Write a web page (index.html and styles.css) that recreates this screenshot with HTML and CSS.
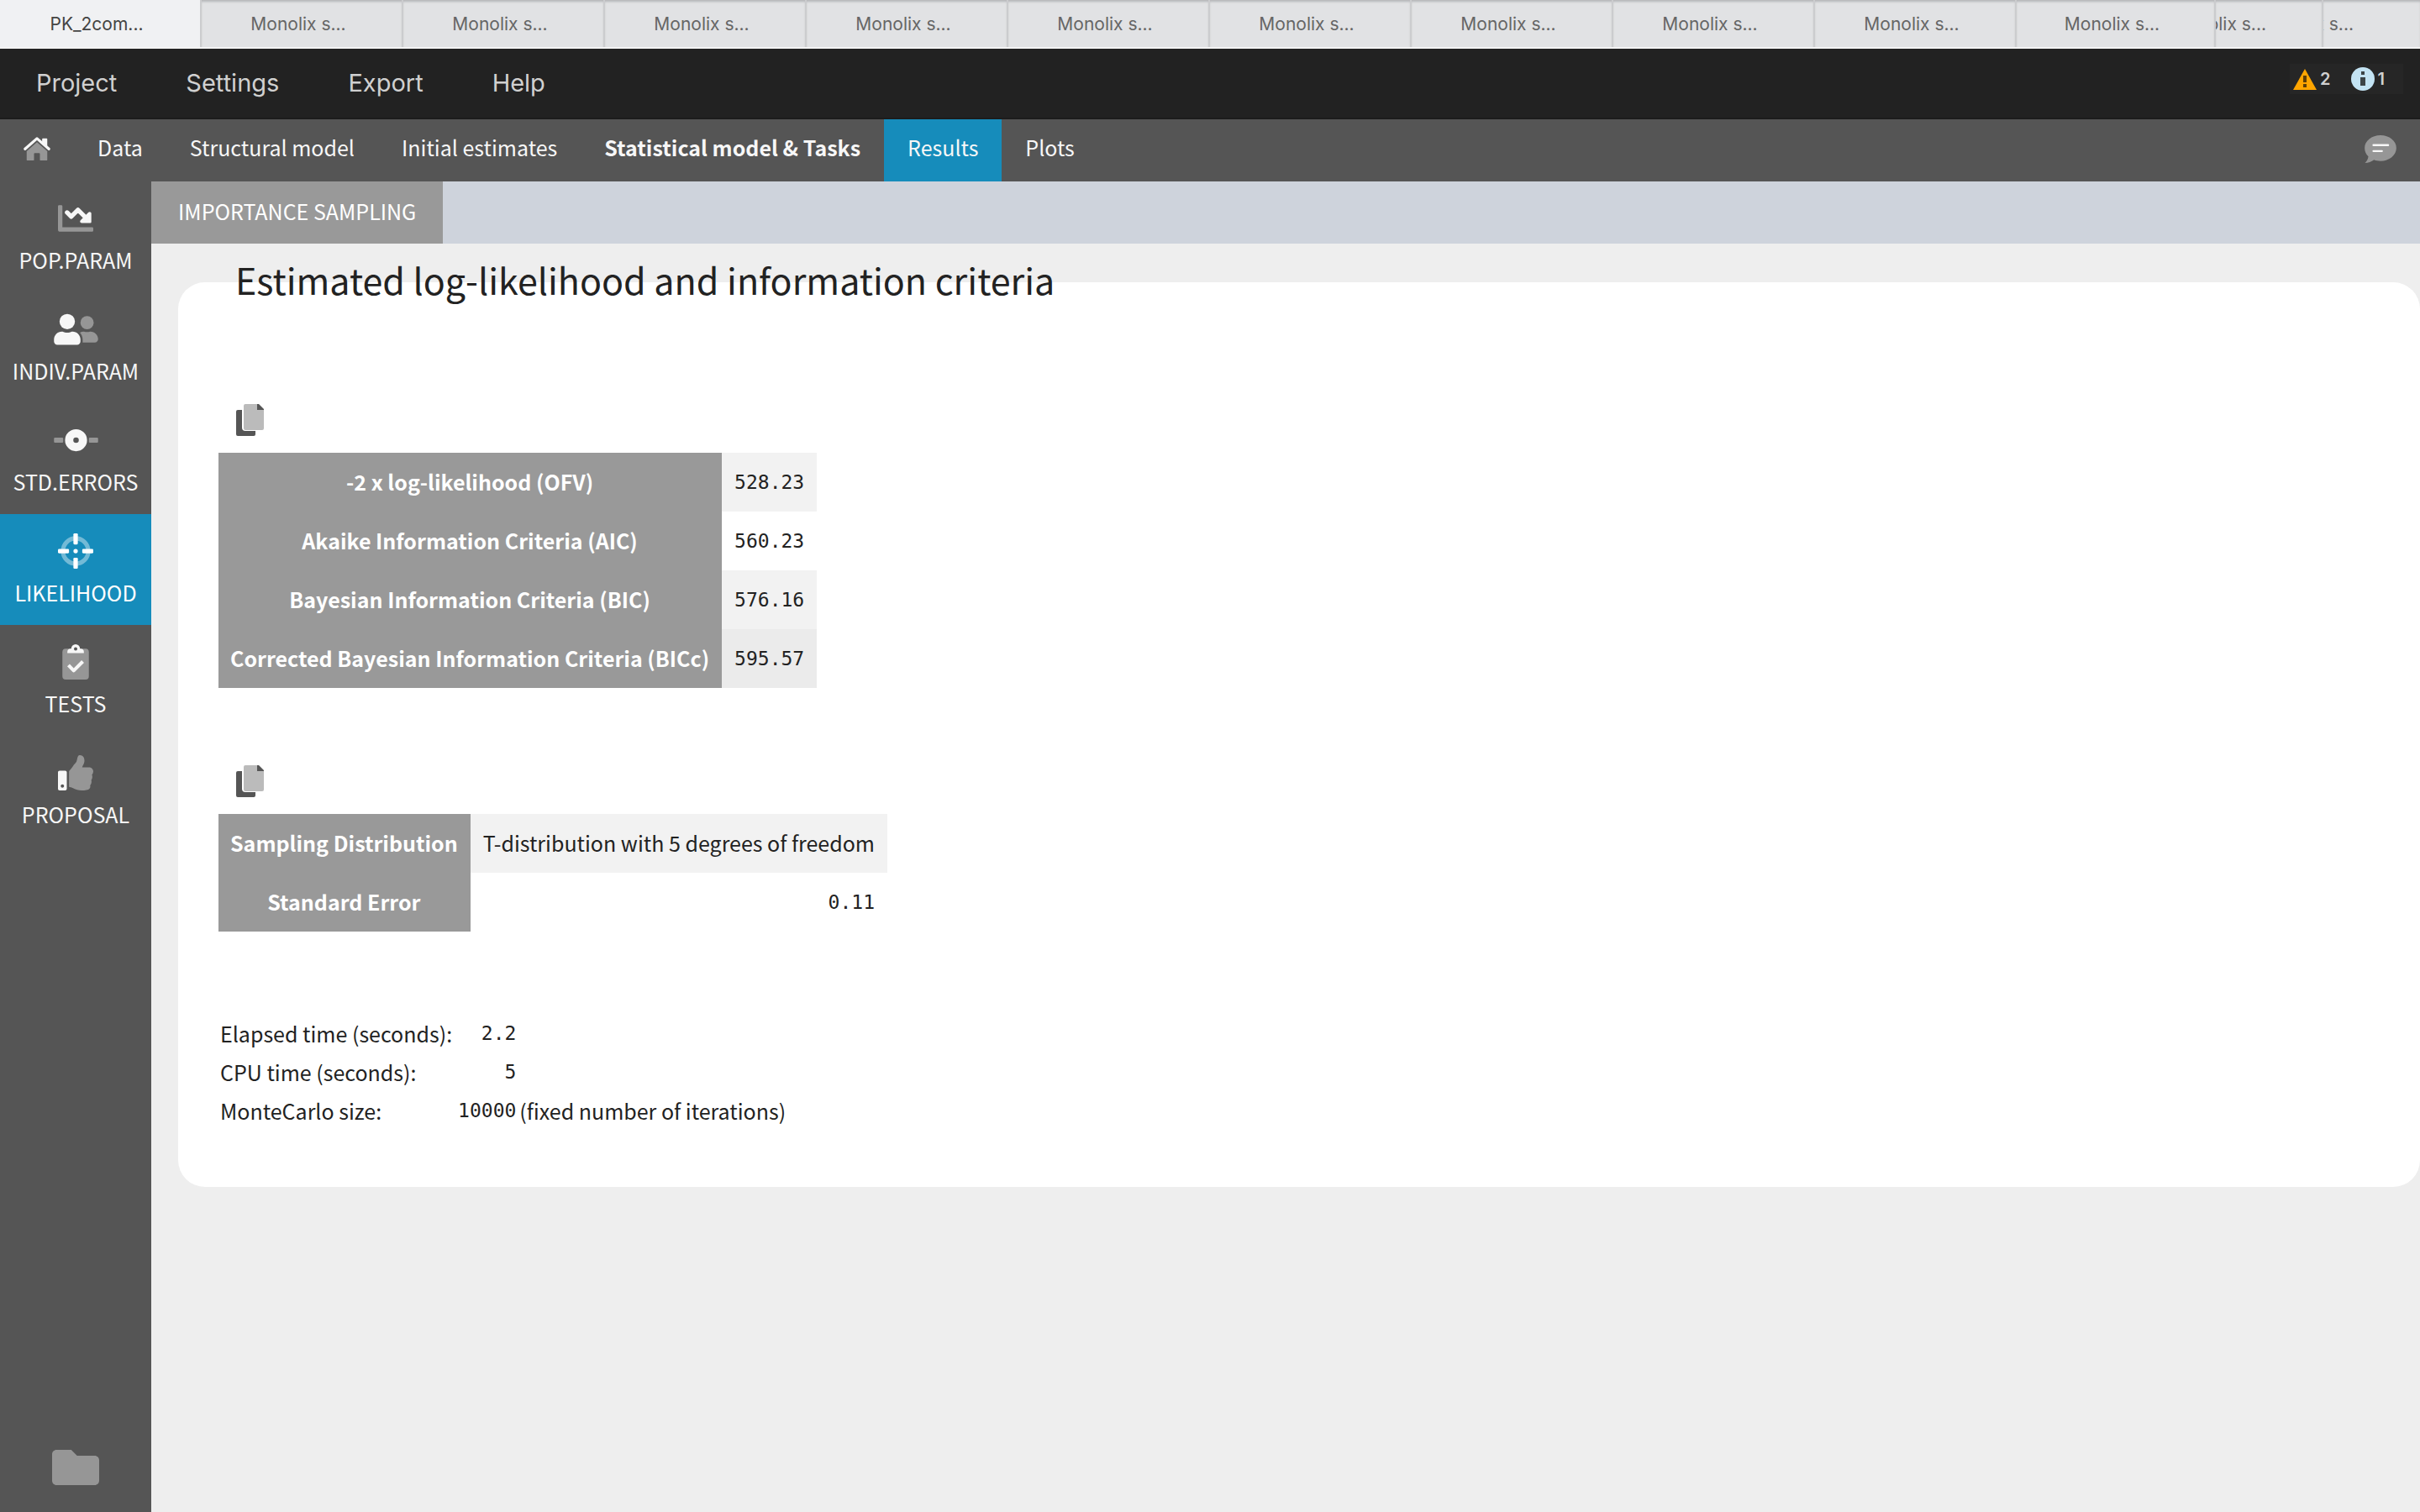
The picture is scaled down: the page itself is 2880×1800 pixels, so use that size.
FILE: index.html
```html
<!DOCTYPE html>
<html lang="en">
<head>
<meta charset="utf-8">
<title>Monolix</title>
<link rel="stylesheet" href="styles.css">
</head>
<body>
<div class="app">
  <div class="window-tabs">
    <button class="window-tab window-tab-active">PK_2com...</button>
    <button class="window-tab">Monolix s...</button>
    <button class="window-tab">Monolix s...</button>
    <button class="window-tab">Monolix s...</button>
    <button class="window-tab">Monolix s...</button>
    <button class="window-tab">Monolix s...</button>
    <button class="window-tab">Monolix s...</button>
    <button class="window-tab">Monolix s...</button>
    <button class="window-tab">Monolix s...</button>
    <button class="window-tab">Monolix s...</button>
    <button class="window-tab">Monolix s...</button>
    <button class="window-tab window-tab-stacked">Monolix s...</button>
    <button class="window-tab window-tab-last">Monolix s...</button>
  </div>

  <header class="menu-bar">
    <button class="menu-item">Project</button>
    <button class="menu-item">Settings</button>
    <button class="menu-item">Export</button>
    <button class="menu-item">Help</button>
    <div class="notices">
      <span class="notice">
        <svg width="28" height="28" viewBox="0 0 28 28" aria-label="Warnings"><path fill="#ffa500" d="M14 2 28 27H0z"/><path fill="#5c3d08" d="M12 10h4v8h-4zM12 20h4v4h-4z"/></svg>
        2
      </span>
      <span class="notice">
        <svg width="28" height="28" viewBox="0 0 28 28" aria-label="Messages"><circle cx="14" cy="14" r="14" fill="#c3e3f3"/><path fill="#3c4447" d="M12 5h4v4h-4zM11 12h6v10h-6z"/></svg>
        1
      </span>
    </div>
  </header>

  <nav class="nav-bar">
    <a class="home" href="#" aria-label="Home">
      <svg width="32" height="28" viewBox="0 0 576 512"><path fill="#969696" d="M288 115L69.500 307.700 64 311V496a16 16 0 0 0 16 16h128a16 16 0 0 0 16-16V368a16 16 0 0 1 16-16h96a16 16 0 0 1 16 16v128a16 16 0 0 0 16 16h128a16 16 0 0 0 16-16V311z"/><path fill="#f7f7f7" d="M416 32h80a16 16 0 0 1 16 16v180l-112-99V48a16 16 0 0 1 16-16z"/><path fill="none" stroke="#f7f7f7" stroke-width="60" stroke-linecap="round" stroke-linejoin="round" d="M30 262 288 34l258 228"/></svg>
    </a>
    <a class="nav-item" href="#">Data</a>
    <a class="nav-item" href="#">Structural model</a>
    <a class="nav-item" href="#">Initial estimates</a>
    <a class="nav-item nav-item-strong" href="#">Statistical model &amp; Tasks</a>
    <a class="nav-item nav-item-active" href="#">Results</a>
    <a class="nav-item" href="#">Plots</a>
    <button class="comment" aria-label="Comments">
      <svg width="38" height="33" viewBox="0 0 112 98"><path fill="#969696" d="M56 0c31 0 56 20 56 45S87 91 56 91c-9 0-16-1-23-4-9 7-20 11-32 11 6-6 11-13 12-23C5 67 0 57 0 45 0 20 25 0 56 0z"/><path stroke="#f7f7f7" stroke-width="7" stroke-linecap="round" d="M31 35h52M31 56h30"/></svg>
    </button>
  </nav>

  <div class="workspace">
    <nav class="sidebar">
      <a class="side-item" href="#">
        <svg class="side-icon" viewBox="0 0 512 512"><path fill="#969696" d="M512 400v32a16 16 0 0 1-16 16H32a32 32 0 0 1-32-32V80a16 16 0 0 1 16-16h32a16 16 0 0 1 16 16v304h432a16 16 0 0 1 16 16z"/><path fill="none" stroke="#f7f7f7" stroke-width="64" stroke-linecap="round" stroke-linejoin="round" d="M132 170l60 60 98-98 130 130"/><path fill="#f7f7f7" d="M484 184v124a16 16 0 0 1-16 16H344c-21 0-32-26-17-41L443 167c15-15 41-4 41 17z"/></svg>
        POP.PARAM
      </a>
      <a class="side-item" href="#">
        <svg class="side-icon side-icon-wide" viewBox="0 0 640 512"><g fill="#f7f7f7"><circle cx="192" cy="144" r="112"/><path d="M268.800 288h-8.300c-20.800 10-43.900 16-68.500 16s-47.600-6-68.500-16h-8.300C51.600 288 0 339.600 0 403.200V432c0 26.500 21.500 48 48 48h288c26.500 0 48-21.500 48-48v-28.800c0-63.600-51.600-115.200-115.200-115.200z"/></g><g fill="#969696"><circle cx="480" cy="160" r="96"/><path d="M528 288h-3.800c-13.900 4.800-28.600 8-44.200 8s-30.300-3.200-44.200-8H432c-20.400 0-39.200 5.900-55.700 15.400 24.400 26.300 39.700 61.200 39.700 99.800v38.400c0 2.200-.5 4.300-.6 6.400H592c26.500 0 48-21.500 48-48 0-61.900-50.100-112-112-112z"/></g></svg>
        INDIV.PARAM
      </a>
      <a class="side-item" href="#">
        <svg class="side-icon side-icon-wide" viewBox="0 0 640 512"><rect y="218" width="134" height="76" rx="14" fill="#969696"/><rect x="506" y="218" width="134" height="76" rx="14" fill="#969696"/><circle cx="320" cy="256" r="100" fill="none" stroke="#f7f7f7" stroke-width="120"/></svg>
        STD.ERRORS
      </a>
      <a class="side-item side-item-active" href="#">
        <svg class="side-icon" viewBox="0 0 512 512"><circle cx="256" cy="256" r="184" fill="none" stroke="#fff" stroke-opacity=".4" stroke-width="62"/><g fill="#fff"><rect x="224" width="64" height="160" rx="16"/><rect x="224" y="352" width="64" height="160" rx="16"/><rect y="224" width="160" height="64" rx="16"/><rect x="352" y="224" width="160" height="64" rx="16"/><circle cx="256" cy="256" r="32"/></g></svg>
        LIKELIHOOD
      </a>
      <a class="side-item" href="#">
        <svg class="side-icon" viewBox="0 0 384 512"><path fill="#969696" d="M336 64H48a48 48 0 0 0-48 48v352a48 48 0 0 0 48 48h288a48 48 0 0 0 48-48V112a48 48 0 0 0-48-48z"/><path fill="#f7f7f7" d="M312 128v-14a50 50 0 0 0-50-50h-6a64 64 0 0 0-128 0h-6a50 50 0 0 0-50 50v14z"/><circle cx="192" cy="66" r="24" fill="#555"/><path fill="none" stroke="#f7f7f7" stroke-width="50" stroke-linejoin="round" d="M88 304l76 78 132-132"/></svg>
        TESTS
      </a>
      <a class="side-item" href="#">
        <svg class="side-icon" viewBox="0 0 512 512"><path fill="#f7f7f7" fill-rule="evenodd" d="M104 224H24c-13.255 0-24 10.745-24 24v240c0 13.255 10.745 24 24 24h80c13.255 0 24-10.745 24-24V248c0-13.255-10.745-24-24-24zM64 472c-13.255 0-24-10.745-24-24s10.745-24 24-24 24 10.745 24 24-10.745 24-24 24z"/><path fill="#969696" d="M384 81.452c0 42.416-25.970 66.208-33.277 94.548h101.723c33.397 0 59.397 27.746 59.553 58.098.084 17.938-7.546 37.249-19.439 49.197l-.11.11c9.836 23.337 8.237 56.037-9.308 79.469 8.681 25.895-.069 57.704-16.382 74.757 4.298 17.598 2.244 32.575-6.148 44.632C440.202 511.587 389.616 512 346.839 512l-2.845-.001c-48.287-.017-87.806-17.598-119.560-31.725-15.957-7.099-36.821-15.887-52.651-16.178-6.540-.12-11.783-5.457-11.783-11.998v-213.770c0-3.200 1.282-6.271 3.558-8.521 39.614-39.144 56.648-80.587 89.117-113.111 14.804-14.832 20.188-37.236 25.393-58.902C282.515 39.293 291.817 0 312 0c24 0 72 8 72 81.452z"/></svg>
        PROPOSAL
      </a>
      <button class="folder" aria-label="Open folder">
        <svg width="56" height="42" viewBox="0 64 512 384"><path fill="#969696" d="M464 128H272l-64-64H48C21.490 64 0 85.490 0 112v288c0 26.510 21.490 48 48 48h416c26.510 0 48-21.490 48-48V176c0-26.510-21.490-48-48-48z"/></svg>
      </button>
    </nav>

    <main class="content">
      <div class="method-bar">
        <button class="method-tab">IMPORTANCE SAMPLING</button>
      </div>
      <section class="panel">
        <h1 class="panel-title">Estimated log-likelihood and information criteria</h1>

        <div class="result-block">
          <button class="copy" aria-label="Copy table">
            <svg width="33" height="38" viewBox="0 0 33 38"><path fill="#555" d="M2 7h5v21a4 4 0 0 0 4 4h12v4a2 2 0 0 1-2 2H2a2 2 0 0 1-2-2V9a2 2 0 0 1 2-2z"/><path fill="#bbb" d="M11 0h14v7h8v22a2 2 0 0 1-2 2H11a2 2 0 0 1-2-2V2a2 2 0 0 1 2-2z"/><path fill="#555" d="M25 0h2l6 6v1h-8z"/></svg>
          </button>
          <table class="result-table">
            <tr><th scope="row">-2 x log-likelihood (OFV)</th><td class="number">528.23</td></tr>
            <tr><th scope="row">Akaike Information Criteria (AIC)</th><td class="number">560.23</td></tr>
            <tr><th scope="row">Bayesian Information Criteria (BIC)</th><td class="number">576.16</td></tr>
            <tr class="row-hover"><th scope="row">Corrected Bayesian Information Criteria (BICc)</th><td class="number">595.57</td></tr>
          </table>
        </div>

        <div class="result-block">
          <button class="copy" aria-label="Copy table">
            <svg width="33" height="38" viewBox="0 0 33 38"><path fill="#555" d="M2 7h5v21a4 4 0 0 0 4 4h12v4a2 2 0 0 1-2 2H2a2 2 0 0 1-2-2V9a2 2 0 0 1 2-2z"/><path fill="#bbb" d="M11 0h14v7h8v22a2 2 0 0 1-2 2H11a2 2 0 0 1-2-2V2a2 2 0 0 1 2-2z"/><path fill="#555" d="M25 0h2l6 6v1h-8z"/></svg>
          </button>
          <table class="result-table">
            <tr><th scope="row">Sampling Distribution</th><td>T-distribution with 5 degrees of freedom</td></tr>
            <tr><th scope="row">Standard Error</th><td class="number">0.11</td></tr>
          </table>
        </div>

        <table class="run-info">
          <tr><th scope="row">Elapsed time (seconds):</th><td class="number">2.2</td><td></td></tr>
          <tr><th scope="row">CPU time (seconds):</th><td class="number">5</td><td></td></tr>
          <tr><th scope="row">MonteCarlo size:</th><td class="number">10000</td><td>(fixed number of iterations)</td></tr>
        </table>
      </section>
    </main>
  </div>
</div>
</body>
</html>
```
FILE: styles.css
```css
* {
  box-sizing: border-box;
}

body {
  margin: 0;
  background: #eee;
  color: #222;
  font-family: "Noto Sans CJK SC", "Noto Sans", sans-serif;
  font-size: 25px;
  line-height: 36px;
}

button {
  margin: 0;
  padding: 0;
  border: 0;
  background: none;
  color: inherit;
  font: inherit;
}

a {
  color: inherit;
  text-decoration: none;
}

svg {
  display: block;
}

table {
  border-collapse: collapse;
}

.app {
  display: flex;
  flex-direction: column;
  min-height: 100vh;
}

/* Window tabs */
.window-tabs {
  display: grid;
  grid-template-columns: repeat(10, 240fr) 237fr 128fr 115fr;
  height: 58px;
  border-bottom: 2px solid #f4f4f4;
  background: #e1e2e4;
  font-family: Inter, sans-serif;
  font-size: 21px;
}

.window-tab {
  display: flex;
  align-items: center;
  justify-content: center;
  padding: 2px 8px 0 0;
  overflow: hidden;
  border-right: 2px solid #cbccce;
  box-shadow: inset 0 3px 3px -1px #b4b5b7;
  color: #666;
  white-space: nowrap;
}

.window-tab-active {
  background: #f0f1f3;
  box-shadow: none;
  color: #444;
}

.window-tab-stacked {
  justify-content: flex-end;
  padding-right: 66px;
}

.window-tab-last {
  justify-content: flex-end;
  padding-right: 79px;
  border-right: 0;
}

/* Menu bar */
.menu-bar {
  display: flex;
  align-items: stretch;
  height: 84px;
  padding: 0 20px 0 2px;
  border-bottom: 2px solid #1c1c1c;
  background: #222;
  color: #d0d0d0;
  font-family: Inter, sans-serif;
  font-size: 29px;
}

.menu-item {
  padding: 0 41px;
}

.notices {
  display: flex;
  align-self: flex-start;
  gap: 24px;
  height: 36px;
  margin: 18px 0 0 auto;
  padding: 0 22px 0 4px;
  background: #262626;
  font-size: 20px;
  font-weight: 600;
}

.notice {
  display: flex;
  align-items: center;
  gap: 4px;
}

/* Section navigation */
.nav-bar {
  display: flex;
  align-items: stretch;
  height: 74px;
  padding: 0 28px;
  background: #555;
  color: #f7f7f7;
}

.home {
  display: flex;
  align-items: center;
  padding: 0 28px 4px 0;
}

.nav-item {
  padding: 15px 28px;
}

.nav-item-strong {
  font-weight: 700;
}

.nav-item-active {
  background: #168cbb;
}

.comment {
  margin-left: auto;
  padding-bottom: 3px;
}

/* Workspace */
.workspace {
  display: flex;
  flex: 1;
}

.sidebar {
  display: flex;
  flex-direction: column;
  width: 180px;
  background: #555;
  color: #f7f7f7;
}

.side-item {
  display: flex;
  flex-direction: column;
  align-items: center;
  gap: 10px;
  height: 132px;
  padding-top: 23px;
}

.side-item-active {
  background: #168cbb;
  color: #fff;
}

.side-icon {
  width: 42px;
  height: 42px;
}

.side-icon-wide {
  width: 53px;
}

.folder {
  align-self: center;
  margin: auto 0 32px;
}

.content {
  flex: 1;
}

.method-bar {
  display: flex;
  height: 74px;
  background: #ced3dc;
}

.method-tab {
  padding: 0 32px 4px;
  background: #999;
  color: #fff;
}

/* Results panel */
.panel {
  display: flow-root;
  margin: 46px 0 0 32px;
  padding: 0 48px 68px;
  border-radius: 32px;
  background: #fff;
}

/* The title straddles the top edge of the panel */
.panel-title {
  margin: -36px 0 117px;
  padding-left: 20px;
  font-size: 43px;
  font-weight: 400;
  line-height: 64px;
}

.result-block {
  margin-bottom: 92px;
}

.result-block .copy {
  display: block;
  margin: 0 0 20px 21px;
}

.result-table th {
  height: 70px;
  padding: 0 15px 2px 14px;
  background: #999;
  color: #fff;
  font-weight: 700;
}

.result-table td {
  padding: 0 15px 2px;
  text-align: right;
}

.result-table tr:nth-child(odd) td {
  background: #f2f2f2;
}

.result-table .row-hover td {
  background: #ebebeb;
}

.result-table .number,
.run-info .number {
  padding-bottom: 0;
  font-family: "DejaVu Sans Mono", monospace;
  font-size: 23px;
  text-align: right;
}

.run-info {
  margin-top: 98px;
}

.run-info th,
.run-info td {
  height: 46px;
  padding: 0 2px;
  font-weight: 400;
  text-align: left;
}

.run-info th {
  padding-right: 5px;
}
```
